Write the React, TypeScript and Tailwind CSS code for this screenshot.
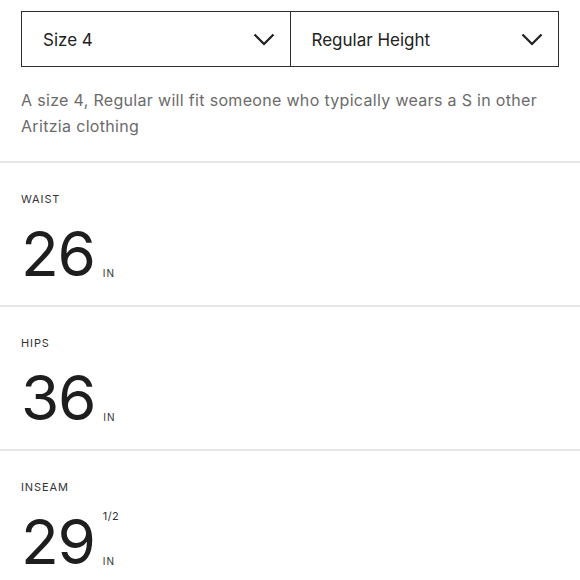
import React from 'react';

const Chevron = () => (
  <svg width="22" height="13" viewBox="0 0 22 13" fill="none">
    <polyline points="1.5,1.5 11,11 20.5,1.5" stroke="#1f1f1f" strokeWidth="2.2" />
  </svg>
);

function Select({ label, last }: { label: string; last?: boolean }) {
  return (
    <div
      className={`flex-1 flex items-center justify-between pl-[21px] pr-[15px] ${
        last ? '' : 'border-r-[1.5px] border-[#2e2e2e]'
      }`}
    >
      <span className="text-[17px] text-[#222] pt-[3px]">{label}</span>
      <Chevron />
    </div>
  );
}

function Measure({ label, value, fraction }: { label: string; value: string; fraction?: string }) {
  return (
    <div className="h-[144px] border-t-2 border-[#e6e6e6] px-[21px] pt-[29px]">
      <div className="text-[11px] leading-[14px] tracking-[0.08em] text-[#333]">{label}</div>
      <div className="flex mt-[17px] h-[62px]">
        <span className="text-[62px] leading-none text-[#1e1e1e] tracking-[-0.02em]">{value}</span>
        <div className="flex flex-col justify-between ml-[8px] pt-[0px] pb-[7px]">
          <span className="text-[11px] leading-none tracking-[0.04em] text-[#333]">{fraction ?? ''}</span>
          <span className="text-[10px] leading-none tracking-[0.1em] text-[#333]">IN</span>
        </div>
      </div>
    </div>
  );
}

export default function App() {
  return (
    <div className="w-[580px] h-[580px] bg-white overflow-hidden font-['Inter',sans-serif]">
      <div className="px-[21px] pt-[11px]">
        <div className="flex h-[56px] border-[1.5px] border-[#2e2e2e]">
          <Select label="Size 4" />
          <Select label="Regular Height" last />
        </div>
      </div>

      <p className="px-[21px] mt-[20px] mb-[22px] text-[16px] leading-[26px] tracking-[0.02em] text-[#6b6b6b]">
        A size 4, Regular will fit someone who typically wears a S in other Aritzia clothing
      </p>

      <Measure label="WAIST" value="26" />
      <Measure label="HIPS" value="36" />
      <Measure label="INSEAM" value="29" fraction="1/2" />
    </div>
  );
}
